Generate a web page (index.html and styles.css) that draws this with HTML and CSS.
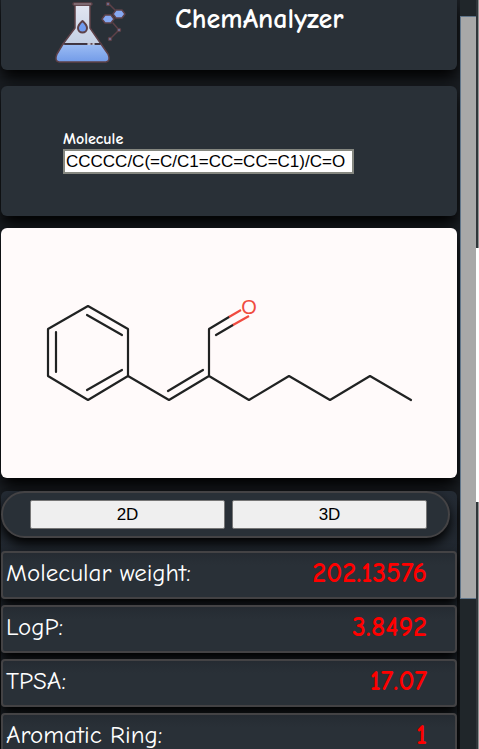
FILE: index.html
```html
<!DOCTYPE html>
<html lang="en">
<head>
<meta charset="utf-8">
<meta name="viewport" content="width=device-width, initial-scale=1">
<title>ChemAnalyzer</title>
<link rel="stylesheet" href="styles.css">
</head>
<body>
<div class="page">
  <main class="content">
    <header class="card header">
      <svg class="logo" viewBox="0 0 72 64" aria-hidden="true">
        <defs>
          <linearGradient id="glass" x1="0" y1="0" x2="0" y2="1"><stop offset="0" stop-color="#e1e5f1"/><stop offset="1" stop-color="#c4d0e4"/></linearGradient>
          <linearGradient id="liquid" x1="0" y1="0" x2="0" y2="1"><stop offset="0" stop-color="#9dbdf4"/><stop offset="1" stop-color="#729be8"/></linearGradient>
        </defs>
        <g stroke="#5d4148" stroke-width="1.5" stroke-linejoin="round" stroke-linecap="round">
          <path fill="url(#glass)" d="M20 5V28L8 44H46L35 28V5Z"/>
          <path fill="url(#liquid)" d="M8 44H46L53 54Q56 61 51 62H4Q-1 61 2 54Z"/>
          <path stroke="#342d38" d="M10 44H32M40 44H45"/>
          <path stroke="#e1e9f7" d="M33 44H35M38 44H39"/>
          <rect x="18" y="3" width="19" height="2" rx="1" fill="#dfe3ed"/>
          <path stroke-width="2" fill="#719cf0" d="M27.500 21Q23 25 23 28A4 4 0 0 0 32 28Q32 25 27.500 21Z"/>
          <path fill="none" d="M54 4 60 10M58 23 64 30 56 38"/>
          <path fill="#86a8f1" d="M58 14 61 10H67L70 14 67 18H61ZM47 19 50 15H56L59 19 56 23H50Z"/>
          <circle cx="53" cy="4" r="1.500" fill="#86a8f1"/>
          <circle cx="64" cy="30" r="1.500" fill="#86a8f1"/>
          <circle cx="55" cy="39" r="1.500" fill="#86a8f1"/>
        </g>
      </svg>
      <h1 class="title">ChemAnalyzer</h1>
    </header>

    <section class="card search">
      <label class="search-label" for="molecule">Molecule</label>
      <input class="search-input" id="molecule" type="text" value="CCCCC/C(=C/C1=CC=CC=C1)/C=O">
    </section>

    <section class="card viewer">
      <svg class="molecule" viewBox="0 0 456 250" role="img" aria-label="Molecule structure">
        <g fill="none" stroke="#202222" stroke-width="2.200" stroke-linecap="round" stroke-linejoin="round">
          <path d="M87 78 127 101V148L87 172 47 148V101ZM86 87 121 107M121 142 86 162M55 144V104"/>
          <path d="M127 148 168 172 208 148 248 172 288 148 329 172 369 148 410 172M167 163 202 142M208 148V101L228 89M215 107 232 97"/>
        </g>
        <path fill="none" stroke="#f04b40" stroke-width="2.200" d="M228 89 240 82M232 97 248 88"/>
        <text class="atom" x="248" y="86">O</text>
      </svg>
    </section>

    <section class="results">
      <div class="switch">
        <button class="mode" type="button">2D</button>
        <button class="mode" type="button">3D</button>
      </div>
      <dl class="properties">
        <div class="property"><dt>Molecular weight:</dt><dd>202.13576</dd></div>
        <div class="property"><dt>LogP:</dt><dd>3.8492</dd></div>
        <div class="property"><dt>TPSA:</dt><dd>17.07</dd></div>
        <div class="property"><dt>Aromatic Ring:</dt><dd>1</dd></div>
      </dl>
    </section>
  </main>
  <div class="track"><div class="thumb"></div></div>
  <div class="edge"></div>
</div>
</body>
</html>
```
FILE: styles.css
```css
* {
  box-sizing: border-box;
}

body {
  margin: 0;
  background: #20262a;
  color: #fff;
  font-family: "Comic Sans MS", "Comic Neue", "Open Sans", sans-serif;
}

.page {
  display: grid;
  grid-template-columns: minmax(0, 1fr) 16px 3px;
  height: 100vh;
  overflow: hidden;
}

.content {
  min-width: 0;
  height: 100vh;
  overflow: hidden;
  padding: 0 3px 0 1px;
  background: #1b1f24;
}

.card {
  border-radius: 6px;
  background: #293037;
  box-shadow: 0 8px 16px #000;
}

.header {
  display: flex;
  align-items: flex-start;
  gap: 48px;
  height: 70px;
  padding-left: 54px;
  border-radius: 0 0 6px 6px;
}

.logo {
  width: 72px;
  height: 64px;
  overflow: visible;
}

.title {
  margin: 0;
  font-size: 28px;
  line-height: 38px;
}

.search {
  display: flex;
  flex-direction: column;
  margin-top: 16px;
  padding: 43px 62px 42px;
}

.search-label {
  font-size: 16px;
  font-weight: 700;
  line-height: 20px;
}

.search-input {
  width: 291px;
  max-width: 100%;
  height: 25px;
  padding: 0 1px;
  border: 2px solid #858780;
  background: #fff;
  color: #000;
  font: 17px "Liberation Sans", Arial, sans-serif;
}

.viewer {
  margin-top: 12px;
  background: #fffafa;
}

.molecule {
  display: block;
  width: 100%;
  height: 250px;
}

.atom {
  fill: #f04b40;
  font: 20px "Liberation Sans", Arial, sans-serif;
  text-anchor: middle;
}

.results {
  margin-top: 13px;
  border-radius: 6px;
  background: linear-gradient(#242b34, #181d22);
  box-shadow: 0 8px 16px #000;
}

.switch {
  display: grid;
  grid-template-columns: 1fr 1fr;
  gap: 7px;
  height: 47px;
  margin-right: 7px;
  padding: 7px 21px 7px 27px;
  border: 2px solid #444345;
  border-radius: 24px;
  background: #293037;
  box-shadow: 0 6px 12px #000;
}

.mode {
  border: 1px solid #767676;
  border-radius: 2px;
  background: #efefef;
  color: #000;
  font: 17px "Liberation Sans", Arial, sans-serif;
}

.properties {
  display: grid;
  gap: 6px;
  margin: 0;
  padding-top: 13px;
}

.property {
  display: flex;
  justify-content: space-between;
  height: 48px;
  padding: 2px 28px 0 3px;
  border: 2px solid #444345;
  border-radius: 4px;
  background: linear-gradient(#252b32, #293037 12px);
  box-shadow: 0 6px 12px #000;
  font-size: 25px;
  line-height: 36px;
}

.property dd {
  margin: 0;
  color: #f00;
  font-size: 28px;
  font-weight: 700;
}

.track {
  padding-top: 16px;
  background: #20262a;
}

.thumb {
  height: 583px;
  border: 1px solid #60758a;
  border-right: 0;
  background: #a8a8a8;
}

.edge {
  background:
    linear-gradient(transparent 248px, #fff 248px, #fff 502px, transparent 502px),
    linear-gradient(90deg, #30363a 2px, #909394 2px);
}
```
